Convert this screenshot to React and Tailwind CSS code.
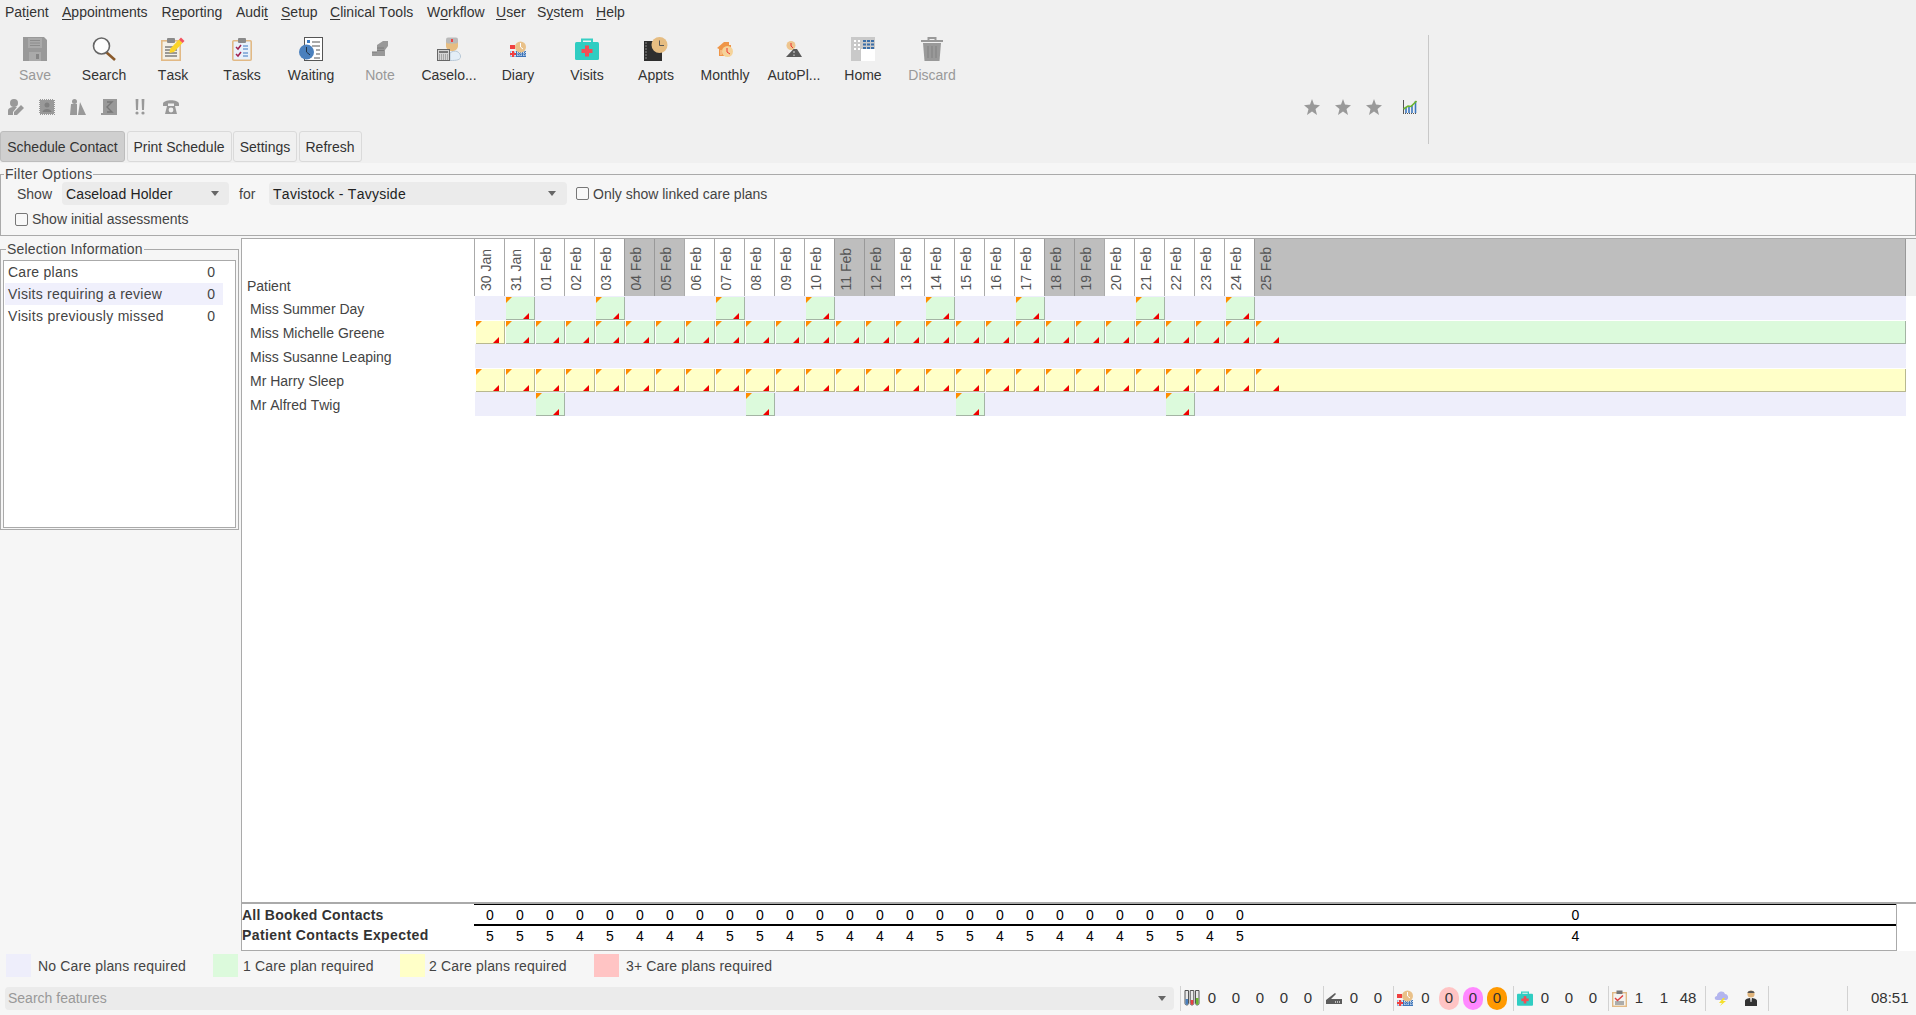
import React from "react";

const S = ({ w = 24, h = 24, vb, className = "", children }) => (
  <svg width={w} height={h} viewBox={vb || `0 0 ${w} ${h}`} className={`shrink-0 ${className}`}>{children}</svg>
);

const Save = () => (
  <S><path d="M0 0H21L24 3V24H0Z" fill="#999" /><rect x="5" y="1" width="14" height="10" fill="#a9a9a9" /><path d="M7 3.5H17M7 6H17M7 8.5H17" stroke="#8c8c8c" /><rect x="6" y="15" width="12" height="9" fill="#aaa" /><rect x="13" y="17" width="3" height="5" fill="#858585" /></S>
);
const SearchIc = () => (
  <S><path d="M14 15L23 23" stroke="#8a5a2b" strokeWidth="2.6" /><circle cx="9.5" cy="9" r="8" fill="#fdfdfd" stroke="#666" strokeWidth="1.6" /></S>
);
const Task = () => (
  <S><rect x="0.8" y="3.8" width="18.4" height="19.4" fill="#f3efe6" stroke="#e2b985" strokeWidth="1.6" /><rect x="6" y="1" width="8" height="5" rx="1" fill="#8a8a8a" /><path d="M4 10H15M4 13H16M4 16H16M4 19H16" stroke="#444" strokeWidth="1.2" /><path d="M9 12L18 2.5L21.5 6L13 15L8.5 16Z" fill="#fbd428" /><path d="M18 2.5L20 0.5L23.5 4L21.5 6Z" fill="#f4525f" /></S>
);
const Tasks = () => (
  <S w={20}><rect x="0.8" y="3.8" width="18.4" height="19.4" rx="1" fill="#e9f1fa" stroke="#e2b985" strokeWidth="1.6" /><rect x="6" y="1" width="8" height="5" rx="1" fill="#8a8a8a" /><path d="M4 10L6 12L9 8M4 17L6 19L9 15" fill="none" stroke="#a1234f" strokeWidth="1.5" /><path d="M11 9H16M11 12H16M11 16H16M11 19H16" stroke="#3c78c0" strokeWidth="1.2" /></S>
);
const Waiting = () => (
  <S><rect x="5.5" y="0.5" width="18" height="23" fill="#fff" stroke="#555" /><rect x="8" y="3" width="3" height="3" fill="#3c7cc4" /><path d="M13 5H21M13 9H21M17 13H21M17 17H21M15 21H21" stroke="#555" /><circle cx="7.5" cy="15" r="7.5" fill="#4a80bd" /><path d="M7.5 10V15L11 18" fill="none" stroke="#234" strokeWidth="1" /></S>
);
const Note = () => (
  <S w={16} h={16}><path d="M5 4L11 0H16V5L13 9V15H0V11H5Z" fill="#999" /><path d="M5 7H12M5 9.5H12M0 11H5" stroke="#7d7d7d" /></S>
);
const Caselo = () => (
  <S><path d="M13 16C18 12 23 15 23.5 19C24 23 20 23.5 13 23.5Z" fill="#e4eef7" stroke="#b8c8d6" /><path d="M9 4H21V9C21 12 18 14 15 14C12 14 9 12 9 9Z" fill="#e6bd82" /><rect x="9" y="0.5" width="12" height="6" rx="2" fill="#b9b9b9" /><rect x="14" y="2" width="2" height="3" fill="#ee4444" /><rect x="0.5" y="12.5" width="12" height="11" fill="#d4d4d4" stroke="#666" /><rect x="2" y="14" width="9" height="2" fill="#777" /><path d="M2 18H11M2 20H11M2 22H11" stroke="#777" strokeDasharray="1 1" /></S>
);
const DiaryIc = ({ s = 16 }) => (
  <S w={s} h={s} vb="0 0 16 16"><rect x="0" y="4" width="5" height="4" fill="#f04040" /><path d="M0 10H16V16H0Z" fill="#3c74b8" /><path d="M1 11.5H16M1 14H16M2 10V16M5 10V16M8 10V16M11 10V16M14 10V16" stroke="#fff" strokeWidth="0.8" strokeDasharray="1 1" /><rect x="0" y="10" width="6" height="6" fill="#fff" opacity="0.5" /><path d="M3 10V16M0 13H6" stroke="#f04040" strokeWidth="2" /><circle cx="10.5" cy="6" r="5.5" fill="#e9c189" /><path d="M10.5 2V6L13 8" stroke="#fff" fill="none" /></S>
);
const VisitsIc = ({ w = 24, h = 22 }) => (
  <S w={w} h={h} vb="0 0 24 22"><path d="M7 5V1.5H17V5" fill="none" stroke="#37cfc4" strokeWidth="2" /><rect x="0" y="4" width="24" height="18" rx="1.5" fill="#30cdc2" /><rect x="10" y="7.5" width="4" height="11" fill="#f54d55" /><rect x="6.5" y="11" width="11" height="4" fill="#f54d55" /></S>
);
const Appts = () => (
  <S><rect x="0" y="4" width="18" height="20" fill="#2e2e2e" /><path d="M1 6H3M1 9H3M1 12H3M1 15H3M1 18H3M1 21H3" stroke="#888" /><circle cx="15.5" cy="8" r="8" fill="#e6bd82" /><path d="M15.5 3.5V8.5H20" fill="none" stroke="#555" /></S>
);
const Monthly = () => (
  <S w={16} h={16}><path d="M0 7L7 1H12V4H14L14 8H12V15H2V8Z" fill="#ef9648" /><path d="M5 9H3V14H5Z" fill="#f6b87f" /><circle cx="10.5" cy="10.5" r="5.5" fill="#f5d39a" /><path d="M10 7V11L13 13" stroke="#e33" fill="none" /></S>
);
const AutoPl = () => (
  <S w={16} h={16}><circle cx="5" cy="4.5" r="4.5" fill="#eec58e" /><path d="M5 2V5L7 7" stroke="#e33" fill="none" /><path d="M7.5 8L11 8L16 16H0Z" fill="#5a5a5a" /><path d="M8 10V12M8 13.5V15" stroke="#ddd" /></S>
);
const Home = () => (
  <S><rect x="0" y="0" width="24" height="24" fill="#c9c9c9" /><rect x="10" y="12" width="14" height="12" fill="#fff" /><rect x="3" y="3" width="2" height="2" fill="#fff" /><rect x="7" y="3" width="2" height="2" fill="#fff" /><rect x="3" y="7" width="2" height="2" fill="#fff" /><rect x="7" y="7" width="2" height="2" fill="#fff" /><rect x="3" y="11" width="2" height="2" fill="#fff" /><rect x="7" y="11" width="2" height="2" fill="#fff" /><path d="M12 4H23M12 7.5H23M12 11H23" stroke="#3c6fa8" strokeWidth="2.2" strokeDasharray="3 1" /></S>
);
const Discard = () => (
  <S w={22}><path d="M7.5 3V1H14.5V3" fill="none" stroke="#999" strokeWidth="2" /><rect x="0" y="3" width="22" height="2" fill="#999" /><path d="M2 6H20L18.5 24H3.5Z" fill="#999" /><path d="M7 9V21M11 9V21M15 9V21" stroke="#868686" strokeWidth="1.2" /></S>
);

const grey = "#999";
const UserEdit = () => (
  <S w={16} h={16}><circle cx="6" cy="4" r="4" fill={grey} /><path d="M0 16V12C0 9 3 8 6 8H9L5 13V16Z" fill={grey} /><path d="M6 16V13L13 6L16 9L9 16Z" fill={grey} /></S>
);
const Stamp = () => (
  <S w={16} h={16}><rect x="0" y="0" width="16" height="16" fill={grey} /><path d="M0.5 0V16M15.5 0V16M0 .5H16M0 15.5H16" stroke="#f0f0f0" strokeWidth="1" strokeDasharray="1 1" /><circle cx="8" cy="6" r="2.5" fill="#808080" /><path d="M3.5 13C4 9 12 9 12.5 13Z" fill="#808080" /></S>
);
const Road = () => (
  <S w={16} h={16}><circle cx="4.5" cy="2.5" r="2.5" fill={grey} /><path d="M1 5H7V16H0Z" fill={grey} /><path d="M10 3L16 16H8Z" fill={grey} /><path d="M7.5 5V16" stroke="#f0f0f0" /></S>
);
const Scroll = () => (
  <S w={16} h={16}><path d="M2 0H16V16H0V14H2Z" fill={grey} /><path d="M6 3H11L6 8L11 13H6" fill="none" stroke="#777" strokeWidth="1.4" /></S>
);
const Bangs = () => (
  <S w={16} h={16}><path d="M3.6 0H6.4L6 11H4ZM9.6 0H12.4L12 11H10Z" fill={grey} /><circle cx="5" cy="14" r="1.6" fill={grey} /><circle cx="11" cy="14" r="1.6" fill={grey} /></S>
);
const Phone = () => (
  <S w={16} h={16}><path d="M0 5C0 0 16 0 16 5V7H11V4.5H5V7H0Z" fill={grey} /><path d="M2 15L4 7H12L14 15Z" fill={grey} /><circle cx="8" cy="11" r="2.4" fill="#f0f0f0" /></S>
);
const Star = () => (
  <S w={16} h={16}><path d="M8 0L10 5.6L16 6.2L11.5 10L13 16L8 12.6L3 16L4.5 10L0 6.2L6 5.6Z" fill="#999" /></S>
);
const ChartIc = () => (
  <S w={14} h={14}><path d="M0.5 0V13" fill="none" stroke="#555" /><path d="M3 7V13M6 6V13M9 5V13M12.5 1V13" stroke="#3c78c0" strokeWidth="1.6" /><path d="M0.5 9L5 6L8 6.5L13.5 1" fill="none" stroke="#6bb52e" strokeWidth="1.6" /><path d="M0 13.5H14" stroke="#555" strokeDasharray="1 1" /></S>
);

const Tubes = () => (
  <S w={16} h={16}><path d="M1 .5H4.5V13.5C4.5 15.5 1 15.5 1 13.5Z M6.2 .5H9.8V13.5C9.8 15.5 6.2 15.5 6.2 13.5Z M11.5 .5H15V13.5C15 15.5 11.5 15.5 11.5 13.5Z" fill="#e8e8e8" stroke="#555" /><path d="M1.5 9H4V14C4 15 1.5 15 1.5 14Z" fill="#4a80bd" /><path d="M6.7 10H9.3V14C9.3 15 6.7 15 6.7 14Z" fill="#e84040" /><path d="M12 8H14.5V14C14.5 15 12 15 12 14Z" fill="#6bb52e" /></S>
);
const RoadSmall = () => (
  <S w={16} h={16}><path d="M0 10L9 3L10 4L5 9H16V14H0Z" fill="#5c5c5c" /><path d="M9 12H14" stroke="#ddd" strokeWidth="1.4" strokeDasharray="1 1" /></S>
);
const ClipSmall = () => (
  <S w={15} h={17}><rect x="0.7" y="2.7" width="13.6" height="13.6" fill="#f3f3f0" stroke="#e2b985" strokeWidth="1.4" /><rect x="4.5" y="0.5" width="6" height="3.5" fill="#777" /><path d="M3 8L5.5 10.5L11 5.5" fill="none" stroke="#e04040" strokeWidth="1.4" /><path d="M3 12H12M3 14H12" stroke="#666" /></S>
);
const Cloud = () => (
  <S w={15} h={16}><path d="M3 10C0 10 0 6 3 6C3 1 10 0 11 4C15 4 15 10 12 10Z" fill="#b3b5ee" /><path d="M9 8L5 13H8L6 16L12 11H9L11 8Z" fill="#f5e02e" /></S>
);
const Person = () => (
  <S w={14} h={16}><circle cx="7" cy="4" r="3.6" fill="#e0b47a" /><path d="M3.5 3C3.5 0 10.5 0 10.5 3Z" fill="#555" /><path d="M1 16V11C1 9 4 8 7 8C10 8 13 9 13 11V16Z" fill="#333" /><path d="M6 8H8L7.5 12H6.5Z" fill="#ddd" /></S>
);
const Arrow = () => (
  <svg width="8" height="5" viewBox="0 0 8 5" className="shrink-0"><path d="M0 0H8L4 5Z" fill="#666" /></svg>
);

const menu = [
  ["Pat", "i", "ent", "w-[57px]"], ["", "A", "ppointments", "w-[99.5px]"], ["R", "e", "porting", "w-[74.5px]"], ["Audi", "t", "", "w-[45px]"], ["", "S", "etup", "w-[49px]"],
  ["", "C", "linical Tools", "w-[97px]"], ["W", "o", "rkflow", "w-[69px]"], ["", "U", "ser", "w-[41px]"], ["S", "y", "stem", "w-[59px]"], ["", "H", "elp", "w-[40px]"],
];
const tools = [
  ["Save", Save, 1], ["Search", SearchIc], ["Task", Task], ["Tasks", Tasks], ["Waiting", Waiting], ["Note", Note, 1],
  ["Caselo...", Caselo], ["Diary", DiaryIc], ["Visits", VisitsIc], ["Appts", Appts], ["Monthly", Monthly], ["AutoPl...", AutoPl],
  ["Home", Home], ["Discard", Discard, 1],
];
const days = ["30 Jan", "31 Jan", "01 Feb", "02 Feb", "03 Feb", "04 Feb", "05 Feb", "06 Feb", "07 Feb", "08 Feb", "09 Feb", "10 Feb", "11 Feb", "12 Feb", "13 Feb", "14 Feb", "15 Feb", "16 Feb", "17 Feb", "18 Feb", "19 Feb", "20 Feb", "21 Feb", "22 Feb", "23 Feb", "24 Feb", "25 Feb"];
const weekend = [5, 6, 12, 13, 19, 20, 26];
const expected = [5, 5, 5, 4, 5, 4, 4, 4, 5, 5, 4, 5, 4, 4, 4, 5, 5, 4, 5, 4, 4, 4, 5, 5, 4, 5, 4];
const idx = days.map((_, i) => i);
const rows = [
  { name: "Miss Summer Day", kind: (i) => ([1, 4, 8, 11, 15, 18, 22, 25].includes(i) ? "g" : "") },
  { name: "Miss Michelle Greene", kind: (i) => (i === 0 ? "y" : "g"), solid: true },
  { name: "Miss Susanne Leaping", kind: () => "" },
  { name: "Mr Harry Sleep", kind: () => "y", solid: true },
  { name: "Mr Alfred Twig", kind: (i) => ([2, 9, 16, 23].includes(i) ? "g" : "") },
];

function Cell({ kind, wide }) {
  const size = wide ? "w-[651px]" : "w-[30px]";
  if (!kind) return <div className={`${size} h-full shrink-0`} />;
  const colour = kind === "g" ? "bg-[#dcfadc] border-[#a4b4a4]" : "bg-[#ffffc8] border-[#b8b890]";
  return (
    <div className={`${size} h-full shrink-0 pl-px pt-px`}>
      <div className={`relative h-full border-r border-b ${colour}`}>
        <div className="absolute left-0 top-0 h-[6px] w-[6px] bg-[#ff8c00] [clip-path:polygon(0_0,100%_0,0_100%)]" />
        <div className="absolute bottom-0 left-[17px] h-[6px] w-[6px] bg-[#f00000] [clip-path:polygon(100%_0,100%_100%,0_100%)]" />
      </div>
    </div>
  );
}

const Check = ({ children, className = "" }) => (
  <label className={`flex items-center ${className}`}>
    <span className="h-[13px] w-[13px] rounded-[2px] border border-[#777] bg-[#f8f8f8]" />
    <span className="ml-[4px] text-[#444]">{children}</span>
  </label>
);
const Combo = ({ text, className, arrowPad, track }) => (
  <div className={`flex h-[23px] items-center justify-between rounded-[4px] bg-[#ebebeb] pl-[4px] text-[#222] ${arrowPad} ${className}`}>
    <span className={track}>{text}</span>
    <Arrow />
  </div>
);
const Div = ({ className = "" }) => <div className={`h-[25px] w-px shrink-0 bg-[#d2d2d2] ${className}`} />;
const Num = ({ children, className = "" }) => <div className={`w-[24px] shrink-0 text-center ${className}`}>{children}</div>;
const Pill = ({ children, className = "" }) => (
  <div className={`flex h-[23px] w-[20px] shrink-0 items-center justify-center rounded-full ${className}`}>{children}</div>
);
const Legend = ({ text, swatch, gap, width }) => (
  <div className={`flex items-center ${width}`}>
    <div className={`h-[23px] w-[25px] ${swatch}`} />
    <span className={`tracking-[0.15px] ${gap}`}>{text}</span>
  </div>
);

export default function App() {
  return (
    <div className="flex h-[1015px] w-[1916px] flex-col overflow-hidden bg-[#f6f6f6] font-['Liberation_Sans',Arial,sans-serif] text-[14px] leading-[16px] text-[#444] [font-kerning:none]">
      <header className="h-[163px] shrink-0 bg-[#f0f0f0] text-[#333]">
        <nav className="flex h-[24px] items-center pl-[5px]">
          {menu.map(([a, b, c, w]) => (
            <span key={a + b + c} className={`shrink-0 ${w}`}>{a}<span className="underline underline-offset-2">{b}</span>{c}</span>
          ))}
        </nav>
        <div className="flex">
          <div className="w-[1428px] shrink-0">
            <div className="flex pl-[0.5px] pt-[13px]">
              {tools.map(([label, Icon, off]) => (
                <div key={label} className={`flex w-[69px] shrink-0 flex-col items-center ${off ? "text-[#999]" : ""}`}>
                  <div className="flex h-[24px] items-center justify-center"><Icon /></div>
                  <span className="mt-[6px]">{label}</span>
                </div>
              ))}
            </div>
            <div className="mt-[16px] flex h-[16px] items-center justify-between pl-[8px] pr-[11px]">
              <div className="flex gap-[15px]">
                <UserEdit /><Stamp /><Road /><Scroll /><Bangs /><Phone />
              </div>
              <div className="flex items-center gap-[15px]">
                <Star /><Star /><Star />
                <span className="ml-[6px]"><ChartIc /></span>
              </div>
            </div>
            <div className="mt-[16px] flex h-[31px] gap-[1.5px]">
              <button className="h-full w-[125px] rounded-[3px] border border-[#bdbdbd] bg-[#cfcfcf] text-[#333]">Schedule Contact</button>
              <button className="h-full w-[105px] rounded-[3px] border border-[#dadada] text-[#333]">Print Schedule</button>
              <button className="h-full w-[64px] rounded-[3px] border border-[#dadada] text-[#333]">Settings</button>
              <button className="h-full w-[63px] rounded-[3px] border border-[#dadada] text-[#333]">Refresh</button>
            </div>
          </div>
          <div className="mt-[11px] h-[109px] w-px bg-[#c8c8c8]" />
        </div>
      </header>

      <fieldset className="mt-[3px] h-[70px] shrink-0 border border-[#aaa]">
        <legend className="ml-[3px] px-px tracking-[0.3px]">Filter Options</legend>
        <div className="flex h-[23px] items-center pl-[16px]">
          <span className="w-[45px]">Show</span>
          <Combo text="Caseload Holder" className="w-[167px]" arrowPad="pr-[10px]" track="tracking-[0.15px]" />
          <span className="ml-[10px] w-[30px]">for</span>
          <Combo text="Tavistock - Tavyside" className="w-[298px]" arrowPad="pr-[11px]" track="tracking-[0.27px]" />
          <Check className="ml-[9px]">Only show linked care plans</Check>
        </div>
        <Check className="ml-[14px] mt-[6px]">Show initial assessments</Check>
      </fieldset>

      <main className="mt-[2px] flex h-[713px] shrink-0">
        <div className="w-[239px] shrink-0 pt-[3px]">
          <fieldset className="h-[289px] border border-[#aaa] pl-[2px]">
            <legend className="ml-[3px] px-px tracking-[0.2px]">Selection Information</legend>
            <div className="mt-[3px] h-[268px] w-[233px] border border-[#aaa] bg-white pl-px pr-[12px]">
              <div className="flex h-[22px] items-center justify-between pl-[3px] pr-[8px]"><span className="tracking-[0.25px]">Care plans</span><span>0</span></div>
              <div className="flex h-[22px] items-center justify-between bg-[#f0f0fc] pl-[3px] pr-[8px]"><span className="tracking-[0.25px]">Visits requiring a review</span><span>0</span></div>
              <div className="flex h-[22px] items-center justify-between pl-[3px] pr-[8px]"><span className="tracking-[0.3px]">Visits previously missed</span><span>0</span></div>
            </div>
          </fieldset>
        </div>

        <section className="ml-[2px] flex min-w-0 flex-1 flex-col border-l border-t border-[#aaa] bg-white">
          <div className="flex h-[57px] shrink-0">
            <div className="flex w-[232px] shrink-0 items-end pb-[2px] pl-[5px]">Patient</div>
            {idx.map((i) => (
              <div key={i} className={`flex h-full shrink-0 items-end border-l pb-[5px] pl-[3px] text-[#555] ${i === 26 ? "w-[652px] border-r border-[#999]" : "w-[30px]"} ${weekend.includes(i) ? "border-[#999] bg-[#bebebe]" : "border-[#aaa] bg-white"}`}>
                <span className="rotate-180 whitespace-nowrap leading-[16px] [writing-mode:vertical-rl]">{days[i]}</span>
              </div>
            ))}
            <div className="flex-1 bg-[#f0f0f0]" />
          </div>
          {rows.map((r) => (
            <div key={r.name} className="flex h-[24px] shrink-0">
              <div className="flex w-[233px] shrink-0 items-center pl-[8px] pt-[1px]">{r.name}</div>
              <div className={`flex h-full w-[1431px] shrink-0 ${r.solid ? "bg-white" : "bg-[#eeeefb]"}`}>
                {idx.map((i) => <Cell key={i} kind={r.kind(i)} wide={i === 26} />)}
              </div>
            </div>
          ))}
          <div className="flex-1" />
          <div className="h-[2px] shrink-0 bg-[#aaa]" />
          <div className="flex h-[47px] w-[1655px] shrink-0 border-b border-r border-[#aaa] text-black">
            <div className="w-[232px] shrink-0 text-[#333]">
              <div className="flex h-[22px] items-center font-bold tracking-[0.25px]">All Booked Contacts</div>
              <div className="flex h-[18px] items-center font-bold tracking-[0.4px]">Patient Contacts Expected</div>
            </div>
            <div className="flex min-w-0 flex-1 flex-col">
              <div className="flex h-[20px] shrink-0 items-center border-t border-black pl-px">
                {idx.map((i) => <div key={i} className={`text-center ${i === 26 ? "flex-1" : "w-[30px] shrink-0"}`}>0</div>)}
              </div>
              <div className="flex flex-1 border-t-2 border-black pl-px pt-[2px]">
                {idx.map((i) => <div key={i} className={`text-center ${i === 26 ? "flex-1" : "w-[30px] shrink-0"}`}>{expected[i]}</div>)}
              </div>
            </div>
          </div>
        </section>
      </main>

      <div className="mt-[3px] flex h-[23px] shrink-0 items-center pl-[6px]">
        <Legend text="No Care plans required" swatch="bg-[#eeeefb]" gap="ml-[7px]" width="w-[207px]" />
        <Legend text="1 Care plan required" swatch="bg-[#dcfadc]" gap="ml-[5px]" width="w-[187px]" />
        <Legend text="2 Care plans required" swatch="bg-[#ffffc8]" gap="ml-[4px]" width="w-[194px]" />
        <Legend text="3+ Care plans required" swatch="bg-[#ffc4c4]" gap="ml-[7px]" width="w-[200px]" />
      </div>

      <footer className="mt-[9px] flex h-[24px] shrink-0 items-center pl-[5px] text-[15px] text-[#333]">
        <div className="flex h-[23px] w-[1169px] shrink-0 items-center justify-between rounded-[4px] bg-[#ebebeb] pl-[3px] pr-[8px] text-[14px] text-[#999]">
          <span>Search features</span>
          <Arrow />
        </div>
        <Div className="ml-[6px]" />
        <span className="ml-[3px]"><Tubes /></span>
        <Num>0</Num><Num>0</Num><Num>0</Num><Num>0</Num><Num>0</Num>
        <Div className="ml-[3px]" />
        <span className="ml-[2px]"><RoadSmall /></span>
        <Num>0</Num><Num>0</Num>
        <Div className="ml-[3px]" />
        <span className="ml-[3px]"><DiaryIc /></span>
        <Num className="pl-px">0</Num>
        <Pill className="ml-[2px] bg-[#ffc4c4]">0</Pill>
        <Pill className="ml-[4px] bg-[#ff88ff]">0</Pill>
        <Pill className="ml-[4px] bg-[#ff9900]">0</Pill>
        <Div className="ml-[6px]" />
        <span className="ml-[3px]"><VisitsIc w={16} h={15} /></span>
        <Num>0</Num><Num>0</Num><Num>0</Num>
        <Div className="ml-[3px]" />
        <span className="ml-[3px]"><ClipSmall /></span>
        <Num>1</Num><Num className="ml-px">1</Num><Num>48</Num>
        <Div className="ml-[5px]" />
        <span className="ml-[8px]"><Cloud /></span>
        <span className="ml-[15px]"><Person /></span>
        <Div className="ml-[10px]" />
        <Div className="ml-[78px]" />
        <span className="ml-[23px]">08:51</span>
      </footer>
    </div>
  );
}
